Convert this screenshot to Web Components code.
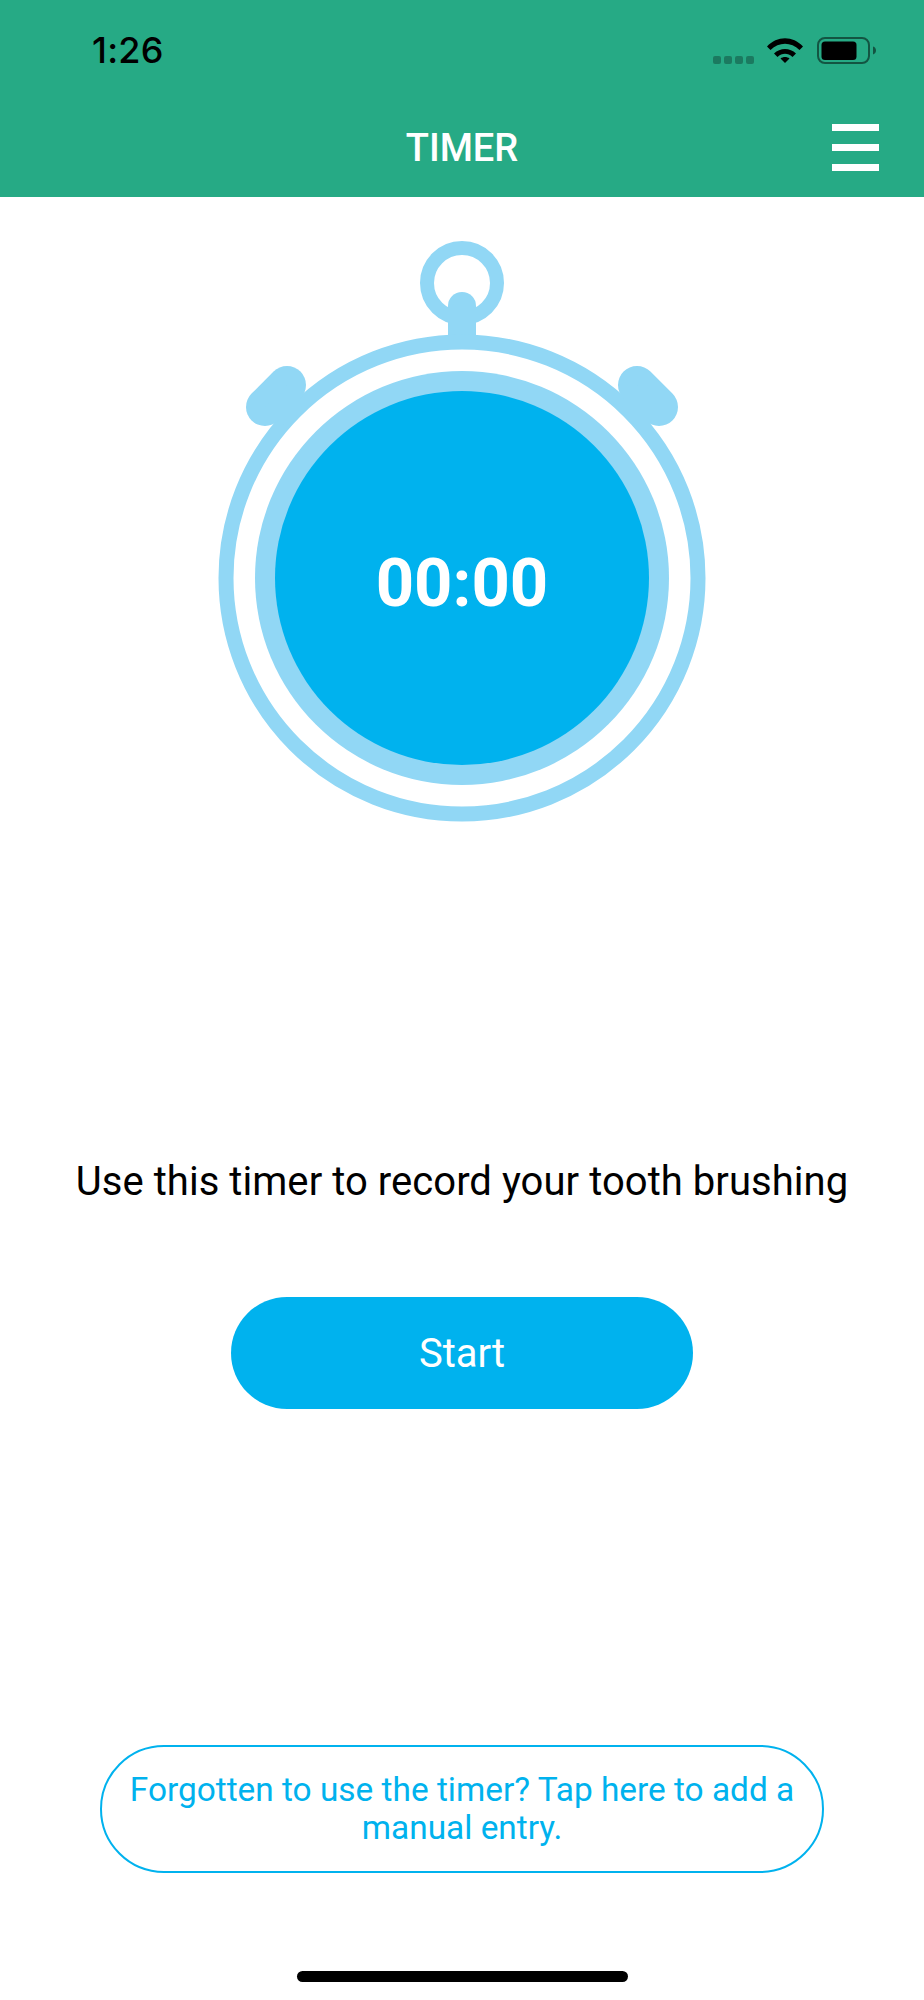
<!DOCTYPE html>
<html lang="en">
<head>
<meta charset="utf-8">
<title>Timer</title>
<style>
  html, body { margin: 0; background: #fff; }
  body { font-family: Roboto, "Liberation Sans", sans-serif; }
</style>
</head>
<body>
<timer-screen>
  <app-header slot="header" time="1:26">TIMER</app-header>
  <stop-watch slot="watch">00:00</stop-watch>
  <span slot="message">Use this timer to record your tooth brushing</span>
  <pill-button slot="start" variant="solid">Start</pill-button>
  <pill-button slot="manual" variant="outline">Forgotten to use the timer? Tap here to add a manual entry.</pill-button>
</timer-screen>

<script>
class TimerScreen extends HTMLElement {
  constructor() {
    super()
    this.attachShadow({ mode: 'open' })
    this.shadowRoot.innerHTML = `
      <style>
        :host {
          display: flex;
          flex-direction: column;
          align-items: center;
          width: 924px;
          height: 2000px;
          background: #fff;
          overflow: hidden;
        }
        ::slotted([slot=header]) { align-self: stretch; }
        ::slotted([slot=watch]) { margin-top: 39px; }
        .message {
          margin-top: 332px;
          font-size: 40px;
          letter-spacing: .05px;
          line-height: 48px;
          color: #000;
          white-space: nowrap;
        }
        ::slotted([slot=start]) { margin-top: 91px; }
        ::slotted([slot=manual]) { margin-top: auto; }
        .home {
          width: 331px;
          height: 11px;
          margin: 98px 0 18px;
          border-radius: 6px;
          background: #000;
        }
      </style>
      <slot name="header"></slot>
      <slot name="watch"></slot>
      <div class="message"><slot name="message"></slot></div>
      <slot name="start"></slot>
      <slot name="manual"></slot>
      <div class="home"></div>
    `
  }
}

class AppHeader extends HTMLElement {
  constructor() {
    super()
    this.attachShadow({ mode: 'open' })
    this.shadowRoot.innerHTML = `
      <style>
        :host {
          display: block;
          height: 197px;
          box-sizing: border-box;
          background: #26aa85;
          color: #fff;
        }
        .status {
          display: flex;
          align-items: flex-start;
          height: 118px;
          box-sizing: border-box;
          padding: 37px 48px 0 92px;
        }
        .time {
          flex: 1;
          font: 550 36px/26px Inter, "Liberation Sans", sans-serif;
          letter-spacing: .2px;
          color: #000;
        }
        .dots {
          display: flex;
          gap: 3px;
          margin: 19px 13px 0 0;
        }
        .dots i {
          width: 8px;
          height: 8px;
          border-radius: 2px;
          background: rgba(0, 0, 0, .28);
        }
        .wifi { display: block; width: 36px; height: 26px; margin-right: 14px; }
        .battery { display: block; width: 59px; height: 27px; }
        .bar {
          display: grid;
          grid-template-columns: 1fr auto 1fr;
          align-items: center;
          padding: 0 45px;
        }
        .title {
          grid-column: 2;
          font-size: 38px;
          font-weight: 500;
          line-height: 60px;
        }
        .menu {
          grid-column: 3;
          justify-self: end;
          display: flex;
          flex-direction: column;
          gap: 12.5px;
          margin-top: -1px;
        }
        .menu i { display: block; width: 47px; height: 7.5px; background: #fff; }
      </style>
      <div class="status">
        <span class="time"></span>
        <span class="dots"><i></i><i></i><i></i><i></i></span>
        <svg class="wifi" viewBox="0 0 36 26" aria-hidden="true">
          <path d="M0 9.500C10-1.500 26-1.500 36 9.500L32.500 13C24 4.500 12 4.500 3.500 13Z"/>
          <path d="M7 16.500C13 10.500 23 10.500 29 16.500L25.500 20C21 15.700 15 15.700 10.500 20Z"/>
          <path d="M13.500 21.500C16 19.500 20 19.500 22.500 21.500L18 26Z"/>
        </svg>
        <svg class="battery" viewBox="0 0 59 27" aria-hidden="true">
          <rect x="1" y="1" width="51" height="25" rx="7" fill="none" stroke="#000" stroke-opacity=".5" stroke-width="2"/>
          <rect x="4.500" y="4.500" width="35" height="18.500" rx="3.500"/>
          <path d="M56 9.500c2 .6 3 2.200 3 4s-1 3.400-3 4Z" fill-opacity=".5"/>
        </svg>
      </div>
      <div class="bar">
        <div class="title"><slot></slot></div>
        <div class="menu"><i></i><i></i><i></i></div>
      </div>
    `
  }

  connectedCallback() {
    this.shadowRoot.querySelector('.time').textContent = this.getAttribute('time') || ''
  }
}

class StopWatch extends HTMLElement {
  constructor() {
    super()
    this.attachShadow({ mode: 'open' })
    this.shadowRoot.innerHTML = `
      <style>
        :host {
          display: grid;
          width: 500px;
          height: 590px;
          place-items: center;
        }
        svg, .face { grid-area: 1 / 1; }
        svg { display: block; width: 500px; height: 590px; }
        .face {
          padding-top: 104px;
          color: #fff;
          font-size: 67px;
          font-weight: 700;
          line-height: 80px;
        }
      </style>
      <svg viewBox="212 236 500 590" aria-hidden="true">
        <circle cx="462" cy="283" r="35" fill="none" stroke="#91d7f5" stroke-width="14"/>
        <path d="M448 342V306a14 14 0 0 1 28 0V342Z" fill="#91d7f5"/>
        <g fill="none" stroke="#91d7f5">
          <circle cx="462" cy="578" r="236" stroke-width="15"/>
          <g stroke-width="38" stroke-linecap="round">
            <path d="M265 407L287 385"/>
            <path d="M659 407L637 385"/>
          </g>
          <g stroke-width="30">
            <path d="M276 396L294 414"/>
            <path d="M648 396L630 414"/>
          </g>
        </g>
        <circle cx="462" cy="578" r="207" fill="#91d7f5"/>
        <circle cx="462" cy="578" r="187" fill="#00b2ee"/>
      </svg>
      <div class="face"><slot></slot></div>
    `
  }
}

class PillButton extends HTMLElement {
  constructor() {
    super()
    this.attachShadow({ mode: 'open' })
    this.shadowRoot.innerHTML = `
      <style>
        :host {
          display: flex;
          align-items: center;
          justify-content: center;
          box-sizing: border-box;
          text-align: center;
          cursor: pointer;
        }
        :host([variant=solid]) {
          width: 462px;
          height: 112px;
          border-radius: 56px;
          background: #00b2ee;
          color: #fff;
          font-size: 40px;
        }
        :host([variant=outline]) {
          width: 724px;
          height: 128px;
          padding: 0 20px;
          border: 2px solid #00b2ee;
          border-radius: 64px;
          color: #00b2ee;
          font-size: 33.4px;
          line-height: 38px;
        }
      </style>
      <slot></slot>
    `
  }
}

customElements.define('timer-screen', TimerScreen)
customElements.define('app-header', AppHeader)
customElements.define('stop-watch', StopWatch)
customElements.define('pill-button', PillButton)
</script>
</body>
</html>
